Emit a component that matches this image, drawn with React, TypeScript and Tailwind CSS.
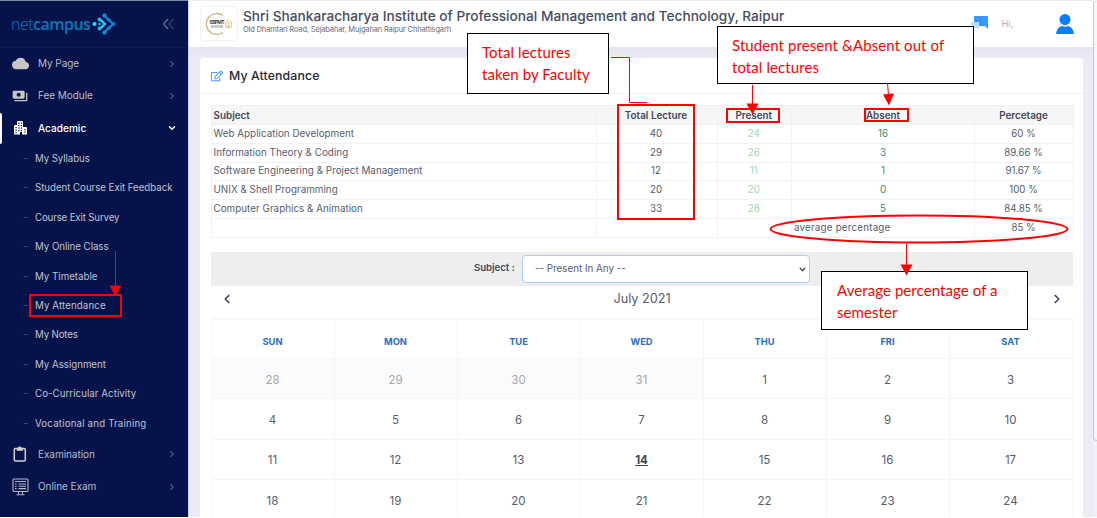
import React from "react";
import { MdCloud, MdPayments } from "react-icons/md";
import { FaRegEdit } from "react-icons/fa";
import { ChevronDown, ChevronLeft, ChevronRight } from "lucide-react";

const subItems = [
  { label: "My Syllabus", spacing: "-tracking-[0.080px]" },
  { label: "Student Course Exit Feedback", spacing: "tracking-[-0.030px]" },
  { label: "Course Exit Survey", spacing: "tracking-[-0.150px]" },
  { label: "My Online Class", spacing: "tracking-[-0.030px]" },
  { label: "My Timetable", spacing: "tracking-[0.020px]" },
  { label: "My Attendance", spacing: "tracking-[0.120px]" },
  { label: "My Notes", spacing: "tracking-[-0.150px]" },
  { label: "My Assignment", spacing: "tracking-[0px]" },
  { label: "Co-Curricular Activity", spacing: "tracking-[0.060px]" },
  { label: "Vocational and Training", spacing: "tracking-[0.180px]" },
];

const rows = [
  ["Web Application Development", "40", "24", "16", "60 %"],
  ["Information Theory & Coding", "29", "26", "3", "89.66 %"],
  ["Software Engineering & Project Management", "12", "11", "1", "91.67 %"],
  ["UNIX & Shell Programming", "20", "20", "0", "100 %"],
  ["Computer Graphics & Animation", "33", "28", "5", "84.85 %"],
];

const days = ["SUN", "MON", "TUE", "WED", "THU", "FRI", "SAT"];
const dates = [
  28, 29, 30, 31, 1, 2, 3, 4, 5, 6, 7, 8, 9, 10, 11, 12, 13, 14, 15, 16, 17, 18, 19, 20, 21, 22, 23, 24,
];

function Logo() {
  return (
    <div className="-ml-px flex items-center">
      <span className="w-[80px] whitespace-nowrap font-['Noto_Sans'] text-[16px] leading-[22px] tracking-[-0.600px] text-[#0d72b4]">
        <span className="font-light">net</span>
        <span className="font-semibold">campus</span>
      </span>
      <svg width="25" height="24" viewBox="0 0 25 24" fill="none" strokeLinecap="round" strokeLinejoin="round">
        <path d="M13 3.500 22 12 13 20.500" stroke="#1482cf" strokeWidth="2.400" />
        <path d="M9 7.500 14 12 9 16.500" stroke="#25c5f5" strokeWidth="2.400" />
        <circle cx="3.500" cy="12" r="2" fill="#35d5fa" />
        <circle cx="8.500" cy="7.500" r="1.900" fill="#25b9f0" />
        <circle cx="8.500" cy="16.500" r="1.900" fill="#25b9f0" />
        <circle cx="8.500" cy="12" r="1.200" fill="#25c5f5" />
        <circle cx="13.500" cy="3.500" r="2.200" fill="#1482cf" />
        <circle cx="13.500" cy="20.500" r="2.200" fill="#1482cf" />
        <circle cx="18" cy="8" r="1.800" fill="#1482cf" />
        <circle cx="18" cy="16" r="1.800" fill="#1482cf" />
        <circle cx="22.500" cy="12" r="1.900" fill="#1482cf" />
      </svg>
    </div>
  );
}

function BuildingIcon() {
  return (
    <svg width="13" height="14" viewBox="0 0 13 14" fill="#fff">
      <path d="M3 1q0-1 1-1h4q1 0 1 1v5h3q1 0 1 1v6.500H8V11H6v2.500H0V5q0-1 1-1h2z" />
      <g fill="#05134a">
        <path d="M4.300 1.500h1.200v1.200H4.300zM6.800 1.500H8v1.200H6.800zM4.300 4h1.200v1.200H4.300zM6.800 4H8v1.200H6.800zM1.500 6h1.200v1.200H1.500zM4.300 6.500h1.200v1.200H4.300zM6.800 6.500H8v1.200H6.800zM1.500 8.500h1.200v1.200H1.500zM4.300 9h1.200v1.200H4.300zM6.800 9H8v1.200H6.800zM10.300 8h1.200v1.200h-1.200zM1.500 11h1.200v1.200H1.500zM10.300 10.500h1.200v1.200h-1.200z" />
      </g>
    </svg>
  );
}

function ClipboardIcon() {
  return (
    <svg width="14" height="16" viewBox="0 0 14 16" fill="none" stroke="#d0cfd3" strokeWidth="1.500">
      <rect x="1.300" y="2.500" width="11" height="12.500" rx="1" />
      <path d="M4 2h1.500a1.300 1.300 0 0 1 2.600 0h1.600v2.500H4z" fill="#d0cfd3" strokeWidth=".6" />
    </svg>
  );
}

function ExamIcon() {
  return (
    <svg width="17" height="18" viewBox="0 0 17 18" fill="none" stroke="#b8b9c4" strokeWidth="1.100">
      <rect x="1" y="1" width="15" height="12.500" rx="1" />
      <path d="M3 3.500h11M6.500 6H14M6.500 8.300H14M6.500 10.600H14M3 6h1.600M3 8.300h1.600M3 10.600h1.600M6.500 14v2M10.500 14v2M4.500 16.800h8" />
    </svg>
  );
}

function MenuRow({ icon, label, active }: { icon: React.ReactNode; label: string; active?: boolean }) {
  return (
    <div className="relative flex h-[32.300px] items-center pl-[11px] pr-[11px]">
      {active && <span className="absolute left-0 top-[1px] h-[31px] w-[2px] rounded-r bg-white" />}
      <span className="flex w-[18px] justify-center text-[#c9c6c8]">{icon}</span>
      <span
        className={
          active
            ? "ml-[9px] text-[10.100px] font-medium text-white"
            : "ml-[9px] text-[10px] tracking-[-0.050px] text-[#b9bccb]"
        }
      >
        {label}
      </span>
      <span className="ml-auto">
        {active ? (
          <ChevronDown size={10} strokeWidth={3.5} className="text-white" />
        ) : (
          <ChevronRight size={10} strokeWidth={2.5} className="text-[#687091]" />
        )}
      </span>
    </div>
  );
}

function Sidebar() {
  return (
    <aside className="flex w-[189px] shrink-0 flex-col border-r border-[#c9d5ef] bg-[#05134a]">
      <div className="flex h-[47.500px] shrink-0 items-center justify-between border-b border-t border-b-[#10194a] border-t-[#7c86a4] pl-3 pr-[13px]">
        <Logo />
        <svg width="13" height="12" viewBox="0 0 13 12" fill="none" strokeWidth="1.400">
          <path d="M6 1 1.500 6 6 11" stroke="#686586" />
          <path d="M11.500 1 7 6l4.500 5" stroke="#353a66" />
        </svg>
      </div>
      <MenuRow icon={<MdCloud size={17} />} label="My Page" />
      <MenuRow icon={<MdPayments size={16} />} label="Fee Module" />
      <MenuRow icon={<BuildingIcon />} label="Academic" active />
      <div className="-mb-[0.500px] flex flex-col">
        {subItems.map(({ label, spacing }) => (
          <div key={label} className="flex h-[29.450px] items-center pl-6 text-[9.700px] text-[#c0c3d2]">
            <span className="w-[11px] text-[7px] text-[#66708f]">–</span>
            <span className={`whitespace-nowrap ${spacing}`}>{label}</span>
          </div>
        ))}
      </div>
      <MenuRow icon={<ClipboardIcon />} label="Examination" />
      <MenuRow icon={<ExamIcon />} label="Online Exam" />
    </aside>
  );
}

function Header() {
  return (
    <header className="flex h-[47px] shrink-0 border-t border-[#ececee] bg-white pl-[11px]">
      <div className="mt-[5px] flex h-[35px] w-[38px] items-center justify-center rounded border border-[#f1f1f3]">
        <svg width="27" height="24" viewBox="0 0 27 24" fill="none">
          <path d="M17 3.500A10.500 10.500 0 1 0 17 20.500" stroke="#d2b47c" strokeWidth="1.300" />
          <text x="3.500" y="12" fontSize="5" fontWeight="700" fill="#444" textLength="15" fontFamily="Inter">
            SSIPMT
          </text>
          <text x="5" y="15.500" fontSize="3" fontWeight="600" fill="#777" textLength="12" fontFamily="Inter">
            RAIPUR
          </text>
          <path d="M22.500 8c4 3 4 5 0 8c-4-3-4-5 0-8zM22.500 10v6M19 15h7" stroke="#dfba88" strokeWidth="1" />
        </svg>
      </div>
      <div className="ml-[5px] flex flex-col pt-[6px]">
        <h1 className="whitespace-nowrap text-[13.700px] font-medium leading-[18px] text-[#464c60]">
          Shri Shankaracharya Institute of Professional Management and Technology, Raipur
        </h1>
        <p className="whitespace-nowrap text-[7.500px] leading-[9px] tracking-[-0.160px] text-[#666b7c]">
          Old Dhamtari Road, Sejabahar, Mujgahan Raipur Chhattisgarh
        </p>
      </div>
      <div className="ml-auto flex pr-[18px]">
        <svg className="mt-[15px]" width="18" height="15" viewBox="0 0 18 15">
          <path d="M3 1q0-1 1-1h12q1 0 1 1v12l-3-3H3z" fill="#3699ff" />
          <path d="M0 6h8v6H3l-3 2z" fill="#bcdcff" />
        </svg>
        <span className="ml-[13px] mt-[16px] text-[9px] leading-[14px] text-[#a6a8b6]">Hi,</span>
        <svg className="ml-[42px] mt-[12px]" width="20" height="22" viewBox="0 0 20 22" fill="#087fff">
          <circle cx="10" cy="6.500" r="5.500" />
          <path d="M1 21q1-7 6-8q3 1.500 6 0q5 1 6 8z" />
        </svg>
      </div>
    </header>
  );
}

const cols = "grid grid-cols-[384.500px_121px_74.500px_183px_99px]";

function AttendanceTable() {
  return (
    <div className="w-[863px] border-l border-t border-[#f0f2f5] text-[9.800px] text-[#565c6d] [&>div>span]:border-b [&>div>span]:border-r [&>div>span]:border-[#f0f2f5]">
      <div className={`${cols} h-[18.900px] bg-[#f6f6f7] text-center text-[9.900px] font-semibold leading-[18px] text-[#424859]`}>
        <span className="pl-[1.500px] text-left">Subject</span>
        <span className="pr-[1px]">Total Lecture</span>
        <span className="pr-[1px]">Present</span>
        <span>Absent</span>
        <span className="pr-[1px]">Percetage</span>
      </div>
      {rows.map((r) => (
        <div key={r[0]} className={`${cols} h-[18.800px] text-center leading-[18px]`}>
          <span className="pl-[1.500px] text-left tracking-[0.040px]">{r[0]}</span>
          <span className="pr-[1px]">{r[1]}</span>
          <span className="pr-[1px] text-[#9bd8b0]">{r[2]}</span>
          <span className="text-[#378d70]">{r[3]}</span>
          <span className="pr-[1px] text-[9.700px]">{r[4]}</span>
        </div>
      ))}
      <div className={`${cols} h-[18.800px] text-center leading-[18px]`}>
        <span />
        <span />
        <span />
        <span className="pl-[2px] text-left tracking-[0.200px]">average percentage</span>
        <span className="pr-[1px] text-[9.700px]">85 %</span>
      </div>
    </div>
  );
}

function Calendar() {
  return (
    <>
      <div className="flex h-8 items-center justify-between px-[9px] text-[#464c5c]">
        <ChevronLeft size={14} strokeWidth={3} className="-mt-[5px]" />
        <span className="-mt-[5px] text-[12.700px] leading-5 text-[#565c6b]">July 2021</span>
        <ChevronRight size={14} strokeWidth={3} className="-mt-[5px]" />
      </div>
      <div className="grid w-[862px] grid-cols-7 border-l border-t-2 border-[#f7f8fa] text-center">
        {days.map((d) => (
          <div
            key={d}
            className="flex h-[39.500px] items-center justify-center border-b border-r border-[#f4f5f7] pr-[1px] pt-[6px] text-[9.300px] font-bold text-[#2670c8]"
          >
            {d}
          </div>
        ))}
        {dates.map((d, i) => (
          <div
            key={i}
            className={`flex h-[40.300px] items-center justify-center border-b border-r border-[#f4f5f7] pr-[1px] pt-[3px] text-[11.500px] ${
              i < 4 ? "bg-[#fafbfc] text-[#a5a6a8]" : "text-[#565c6b]"
            }`}
          >
            {d === 14 ? <b className="font-bold text-[#3f4452] underline">14</b> : d}
          </div>
        ))}
      </div>
    </>
  );
}

function Annotations() {
  return (
    <div className="pointer-events-none absolute inset-0 font-[Lato,sans-serif] text-[15px] leading-[22px] tracking-[0.080px] text-[#f00]">
      <div className="absolute left-[467px] top-[33px] h-[61px] w-[142px] border border-black bg-white pl-[14px] pt-[7px]">
        Total lectures
        <br />
        taken by Faculty
      </div>
      <div className="absolute left-[717px] top-[26px] h-[58px] w-[257px] border border-black bg-white pl-[14px] pt-[7px]">
        Student present &amp;Absent out of
        <br />
        total lectures
      </div>
      <div className="absolute left-[821px] top-[271px] h-[59px] w-[207px] border border-black bg-white pl-[15px] pt-[7px]">
        Average percentage of a<br />
        semester
      </div>
      <div className="absolute left-[617px] top-[104px] h-[116px] w-[78px] border-2 border-[#f00]" />
      <div className="absolute left-[726px] top-[108px] h-[15px] w-[54px] border-2 border-[#f00]" />
      <div className="absolute left-[864px] top-[108px] h-[14px] w-[45px] border-2 border-[#f00]" />
      <div className="absolute left-[29px] top-[294px] h-[23px] w-[93px] border-2 border-[#f00]" />
      <svg className="absolute inset-0" width="1097" height="518" fill="none" stroke="#f00">
        <path d="M611 57.500h18.500v45H647" />
        <path d="M115.500 251v37M752.500 85v20M887.500 83l1 12M906.500 244v22" />
        <ellipse cx="919" cy="229" rx="148.500" ry="13.500" strokeWidth="2" />
        <path
          d="M109.500 285.500h12l-6 11zM746.500 103.500h12l-6 11zM883 94.500l11-1-5 12zM900.500 264.500h12l-6 11z"
          fill="#f00"
          stroke="none"
        />
      </svg>
    </div>
  );
}

export default function App() {
  return (
    <div className="relative h-[518px] w-[1097px] overflow-hidden bg-white font-[Inter,sans-serif]">
      <div className="flex h-[517px] overflow-hidden">
        <Sidebar />
        <div className="flex min-w-0 flex-1 flex-col bg-[#ebecf6]">
          <Header />
          <div className="flex-1 overflow-hidden bg-linear-to-b from-[#e4e5f1] to-[#ebecf6] to-[12px] pl-[11px] pt-[11px]">
            <main className="h-[520px] w-[883px] rounded-t bg-white">
              <div className="flex h-9 items-center border-b border-[#f0f1f5] pl-[11px] pt-px">
                <FaRegEdit size={12} className="text-[#4b9cff]" />
                <h2 className="ml-[6px] text-[12.300px] font-medium tracking-[0.120px] text-[#232733]">My Attendance</h2>
              </div>
              <div className="pl-[11px] pr-[10px] pt-[11px]">
                <AttendanceTable />
                <div className="mt-[14px] flex h-[34px] items-center bg-[#eee] pl-[263px]">
                  <label className="w-[48px] whitespace-nowrap text-[9.600px] font-semibold text-[#424859]">Subject :</label>
                  <div className="flex h-[28px] w-[288px] items-center justify-between rounded border border-[#a6cff9] bg-white pl-3 pr-[2px] pt-px text-[9.800px] text-[#565c6b]">
                    <span>-- Present In Any --</span>
                    <ChevronDown size={9} strokeWidth={4} />
                  </div>
                </div>
                <Calendar />
              </div>
            </main>
          </div>
        </div>
        <div className="w-[4px] shrink-0 bg-[#f1f1f2]">
          <div className="mt-px h-[440px] rounded-l border-b border-l border-[#c8c8ca] bg-[#f7f7f7]" />
        </div>
      </div>
      <Annotations />
    </div>
  );
}
